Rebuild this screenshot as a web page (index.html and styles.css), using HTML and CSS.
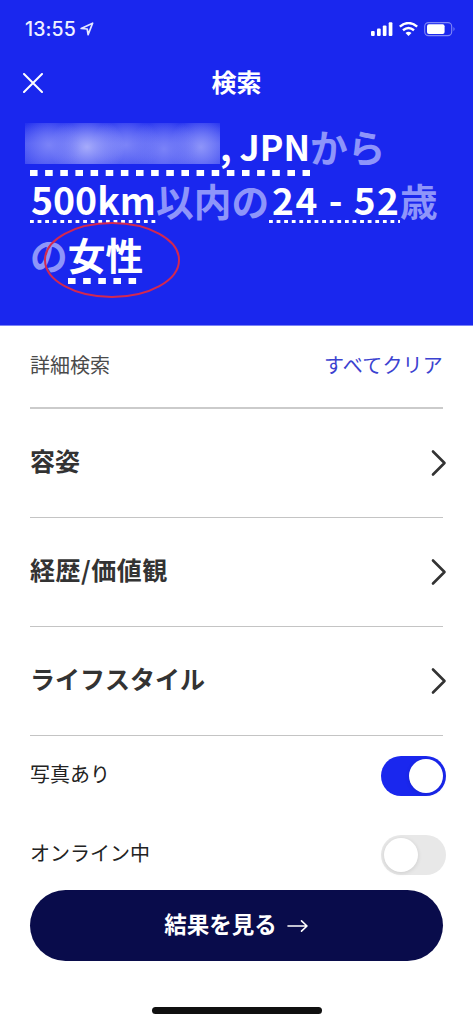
FILE: index.html
```html
<!DOCTYPE html>
<html lang="ja">
<head>
<meta charset="utf-8">
<title>検索</title>
<link rel="stylesheet" href="styles.css">
</head>
<body>
<main class="screen">
  <header class="hero">
    <div class="status">
      <div class="clock"><span>13:55</span>
        <svg width="14" height="14" viewBox="0 0 14 14"><path d="M1.2 6.5 12.6 1.2 8.1 12.6 7.2 7Z" fill="none" stroke="#e4e7ff" stroke-width="1.7" stroke-linejoin="round"/></svg>
      </div>
      <svg class="indicators" width="86" height="16" viewBox="0 0 86 16">
        <g fill="#fff"><rect x="1" y="9" width="3.7" height="5" rx="1"/><rect x="7" y="6.5" width="3.7" height="7.5" rx="1"/><rect x="12.8" y="3.5" width="3.7" height="10.5" rx="1"/><rect x="18.7" y="0.3" width="3.7" height="13.7" rx="1"/></g>
        <g fill="none" stroke="#fff" stroke-width="2.4"><path d="M29.8 4.7Q38.5-2.6 47.2 4.7"/><path d="M33 8.3Q38.5 3.8 44 8.3"/></g>
        <path d="M35.5 11Q38.5 8.6 41.5 11L38.5 14Z" fill="#fff"/>
        <rect x="54.7" y="0.6" width="27" height="13" rx="3.8" fill="none" stroke="#8088f7" stroke-width="1.1"/>
        <rect x="57" y="2.3" width="17.6" height="9.6" rx="2" fill="#fff"/>
        <path d="M83.5 5Q85.6 7 83.5 9.2Z" fill="#8088f7"/>
      </svg>
    </div>
    <div class="titlebar">
      <svg class="close" width="20" height="20" viewBox="0 0 20 20"><path d="M1 1 19 19M19 1 1 19" stroke="#fff" stroke-width="2" stroke-linecap="round"/></svg>
      <h1>検索</h1>
    </div>
    <div class="query">
      <p class="line"><span class="pick wide place"><i class="masked"></i><span class="country">, JPN</span></span><span>から</span></p>
      <p class="line"><span class="pick fine distance">500km</span><span>以内の</span><span class="pick fine age">24 - 52</span><span>歳</span></p>
      <p class="line"><span>の</span><span class="pick wide gender">女性</span></p>
      <svg class="circle" width="138" height="78" viewBox="0 0 138 78"><ellipse cx="69" cy="39" rx="67" ry="37" fill="none" stroke="#d32850" stroke-width="2"/></svg>
    </div>
  </header>
  <section class="details">
    <div class="row head"><span>詳細検索</span><a class="clear">すべてクリア</a></div>
    <div class="row item"><h2>容姿</h2><svg width="16" height="28" viewBox="0 0 16 28"><path d="M2 2.5 13.5 14 2 25.5" class="chev"/></svg></div>
    <div class="row item"><h2 class="spaced">経歴/価値観</h2><svg width="16" height="28" viewBox="0 0 16 28"><path d="M2 2.5 13.5 14 2 25.5" class="chev"/></svg></div>
    <div class="row item"><h2>ライフスタイル</h2><svg width="16" height="28" viewBox="0 0 16 28"><path d="M2 2.5 13.5 14 2 25.5" class="chev"/></svg></div>
    <div class="row option"><span>写真あり</span><span class="toggle on"><i class="knob"></i></span></div>
    <div class="row option"><span>オンライン中</span><span class="toggle"><i class="knob"></i></span></div>
  </section>
  <button class="submit"><span>結果を見る</span><svg width="22" height="14" viewBox="0 0 22 14"><path d="M1 7H20M14.5 1.8 20 7 14.5 12.2" fill="none" stroke="#fff" stroke-width="1.6" stroke-linecap="round" stroke-linejoin="round"/></svg></button>
  <div class="home"></div>
</main>
</body>
</html>
```
FILE: styles.css
```css
* { box-sizing: border-box; }
body { margin: 0; background: #fff; font-family: "Noto Sans CJK JP", sans-serif; }
h1, h2, p { margin: 0; }
svg { display: block; flex: none; }
.screen { width: 473px; height: 1024px; overflow: hidden; display: flex; flex-direction: column; }
.hero { height: 326px; flex: none; background: #1a27ee; border-bottom: 1px solid #7b83f6; color: #fff; }
.status { height: 58px; padding: 0 17px 0 25px; display: flex; align-items: center; justify-content: space-between; }
.clock { display: flex; align-items: center; gap: 4px; font: 500 19.5px/24px Inter, sans-serif; color: #eef0ff; letter-spacing: 0.1px; }
.indicators { margin-top: 2px; }
.titlebar { height: 50px; display: grid; grid-template-columns: 1fr auto 1fr; align-items: center; padding: 0 23px; }
.titlebar h1 { font-size: 25px; line-height: 36px; font-weight: 700; grid-column: 2; padding-bottom: 4px; }
.query { position: relative; padding: 14px 0 0 30px; color: #8e95fa; font-size: 37.7px; font-weight: 700; }
.line { display: flex; height: 54px; line-height: 47px; white-space: pre; }
.pick { color: #fff; height: 54px; background-repeat: repeat-x; }
.wide { background-image: linear-gradient(90deg, #fff 8px, transparent 8px); background-size: 15.15px 6px; background-position: 0 48px; }
.fine { background-image: linear-gradient(90deg, #fff 4.2px, transparent 4.2px); background-size: 7.6px 3px; background-position: 0 44px; }
.place { width: 280px; display: flex; }
.country { font-size: 35.5px; line-height: 48px; }
.distance { width: 126px; font-size: 37.4px; padding-left: 1px; }
.age { width: 131px; padding-left: 3px; font-size: 37px; letter-spacing: 1.5px; }
.gender { width: 69px; }
.masked { width: 195px; height: 41px; margin: 1px 0 0 -5px; flex: none; background:
  radial-gradient(ellipse 32px 30px at 24px 22px, #7b83f8, #7b83f800),
  radial-gradient(ellipse 38px 32px at 62px 24px, #a6abfb, #a6abfb00),
  radial-gradient(ellipse 34px 30px at 101px 22px, #7c84f8, #7c84f800),
  radial-gradient(ellipse 34px 32px at 139px 26px, #7a82f8, #7a82f800),
  radial-gradient(ellipse 32px 32px at 176px 24px, #8e95f9, #8e95f900),
  linear-gradient(180deg, #2431ef, #4b57f3 50%, #3f4bf1); }
.circle { position: absolute; left: 43px; top: 113px; }
.details { padding: 0 30px; }
.row { display: flex; align-items: center; justify-content: space-between; }
.head { height: 83px; border-bottom: 2px solid #cbcbcb; font-size: 20px; color: #4a4a4a; }
.head > * { padding-bottom: 4px; }
.clear { color: #3b42d0; font-size: 20px; letter-spacing: 0.2px; }
.item { height: 109px; border-bottom: 1px solid #c4c4c4; }
.item h2 { font-size: 25px; line-height: 36px; font-weight: 700; color: #333; padding-bottom: 6px; }
.item .spaced { letter-spacing: 0.5px; }
.item svg { margin-right: -4px; }
.chev { fill: none; stroke: #333; stroke-width: 2.6; stroke-linecap: round; stroke-linejoin: round; }
.option { height: 79px; font-size: 20px; color: #222; }
.option > span:first-child { padding-bottom: 4px; }
.toggle { width: 65px; height: 40px; margin-right: -3px; border-radius: 20px; padding: 3px; background: #e8e8e8; display: flex; }
.toggle.on { background: #1a27ee; justify-content: flex-end; }
.knob { width: 34px; height: 34px; border-radius: 50%; background: #fff; box-shadow: 0 1px 4px rgba(0,0,0,.12); }
.submit { width: 413px; height: 71px; margin: -4px 30px 0; flex: none; border: 0; border-radius: 36px; background: #090c4b; color: #fff; font: 700 22.5px/32px "Noto Sans CJK JP", sans-serif; display: flex; align-items: center; justify-content: center; gap: 10px; }
.submit span { padding-bottom: 5px; }
.home { width: 170px; height: 7px; margin: 46px auto 0; border-radius: 4px; background: #101010; flex: none; }
```
